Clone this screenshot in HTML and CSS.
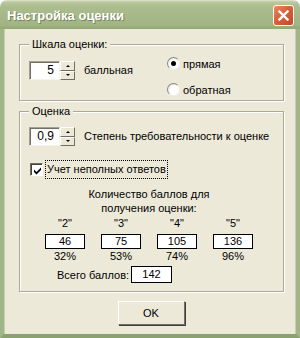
FILE: index.html
```html
<!DOCTYPE html>
<html lang="ru">
<head>
  <meta charset="UTF-8">
  <title>Настройка оценки</title>
  <link rel="stylesheet" href="styles.css">
</head>
<body>
  <div class="window">
    <div class="titlebar">
      <span class="title">Настройка оценки</span>
      <button class="close-btn" title="Закрыть">
        <svg width="11" height="11" viewBox="0 0 11 11">
          <path d="M1.5 1.5 L9.5 9.5 M9.5 1.5 L1.5 9.5" stroke="#fff" stroke-width="2.4" stroke-linecap="square"/>
        </svg>
      </button>
    </div>

    <div class="client">
      <fieldset class="group scale">
        <legend>Шкала оценки:</legend>
        <div class="scale-row">
          <div class="scale-left">
            <div class="spinner">
              <div class="edit">5</div>
              <div class="spin">
                <span class="spin-btn"><i class="arrow up"></i></span>
                <span class="spin-btn"><i class="arrow down"></i></span>
              </div>
            </div>
            <span class="caption">балльная</span>
          </div>
          <div class="radios">
            <label class="radio checked"><span class="dot"></span>прямая</label>
            <label class="radio"><span class="dot"></span>обратная</label>
          </div>
        </div>
      </fieldset>

      <fieldset class="group grade">
        <legend>Оценка</legend>
        <div class="spinner-row">
          <div class="spinner">
            <div class="edit">0,9</div>
            <div class="spin">
              <span class="spin-btn"><i class="arrow up"></i></span>
              <span class="spin-btn"><i class="arrow down"></i></span>
            </div>
          </div>
          <span class="caption">Степень требовательности к оценке</span>
        </div>

        <div class="check-row">
          <span class="checkbox">
            <svg width="9" height="9" viewBox="0 0 9 9">
              <path d="M1 3.5 L3.5 6 L8 1.5 L8 4 L3.5 8.5 L1 6 Z" fill="#000"/>
            </svg>
          </span>
          <span class="check-label">Учет неполных ответов</span>
        </div>

        <div class="points">
          <div class="points-title">Количество баллов для<br>получения оценки:</div>
          <div class="marks">
            <div class="mark"><span>"2"</span><div class="num">46</div><span>32%</span></div>
            <div class="mark"><span>"3"</span><div class="num">75</div><span>53%</span></div>
            <div class="mark"><span>"4"</span><div class="num">105</div><span>74%</span></div>
            <div class="mark"><span>"5"</span><div class="num">136</div><span>96%</span></div>
          </div>
          <div class="total">
            <span>Всего баллов:</span>
            <div class="num total-num">142</div>
          </div>
        </div>
      </fieldset>

      <div class="actions">
        <button class="ok">OK</button>
      </div>
    </div>
  </div>
</body>
</html>
```

FILE: styles.css
```css
body {
  margin: 0;
  background: #fff;
  font-family: "Liberation Sans", Arial, sans-serif;
  font-size: 11px;
  color: #000;
}

.window {
  width: 300px;
  height: 338px;
  display: flex;
  flex-direction: column;
}

.titlebar {
  height: 29px;
  flex: none;
  display: flex;
  align-items: center;
  justify-content: space-between;
  padding: 0 6px 0 7px;
  box-sizing: border-box;
  border-radius: 7px 7px 0 0;
  background: linear-gradient(#dfe6cc 0, #bcc9a0 2px, #adbd90 6px, #a7b889 50%, #a2b484 85%, #93a875 100%);
}

.title {
  color: #fff;
  font-weight: bold;
  font-size: 13px;
  text-shadow: 1px 1px 0 #75865a;
  margin-top: 1px;
}

.close-btn {
  width: 21px;
  height: 21px;
  padding: 0;
  margin-top: 2px;
  border: 1px solid #fff;
  border-radius: 3px;
  background: linear-gradient(135deg, #e98a64 0, #d9603b 45%, #c24a28 100%);
  display: flex;
  align-items: center;
  justify-content: center;
}

.client {
  flex: 1;
  min-height: 0;
  background: #ece9d8;
  border: 4px solid #a2b586;
  border-top: none;
  border-bottom-color: #8ca170;
  box-shadow: inset 1px 0 0 #c3cfae, inset -1px 0 0 #c3cfae;
  padding: 9px 12px 0 15px;
}

/* etched group box */
.group {
  margin: 0;
  width: 265px;
  box-sizing: border-box;
  border: 1px solid #aca899;
  box-shadow: 1px 1px 0 #fff, inset 1px 1px 0 #fff;
  padding: 6px 9px 4px 9px;
}

.group legend {
  padding: 0 3px;
  line-height: 13px;
  background: #ece9d8;
}

.grade {
  margin-top: 4px;
  padding: 9px 9px 8px 9px;
}

.scale-row {
  display: flex;
  align-items: flex-start;
}

.scale-left {
  width: 137px;
  display: flex;
  align-items: flex-start;
  margin-top: 4px;
}

.spinner-row {
  display: flex;
  align-items: flex-start;
}

.spinner {
  display: flex;
  height: 19px;
  flex: none;
}

.edit {
  width: 31px;
  height: 19px;
  box-sizing: border-box;
  background: #fff;
  border: 1px solid;
  border-color: #a5a292 #f4f3ee #f4f3ee #a5a292;
  box-shadow: inset 1px 1px 0 #716f64;
  text-align: right;
  padding-right: 5px;
  line-height: 17px;
  font-size: 12px;
}

.spin {
  width: 15px;
  display: flex;
  flex-direction: column;
}

.spin-btn {
  flex: 1;
  box-sizing: border-box;
  background: #ece9d8;
  border: 1px solid;
  border-color: #fff #716f64 #716f64 #fff;
  display: flex;
  align-items: center;
  justify-content: center;
}

.arrow {
  width: 0;
  height: 0;
  border-left: 2px solid transparent;
  border-right: 2px solid transparent;
}

.arrow.up {
  border-bottom: 2px solid #000;
}

.arrow.down {
  border-top: 2px solid #000;
}

.caption {
  margin-left: 9px;
  line-height: 19px;
  white-space: nowrap;
}

.radios {
  display: flex;
  flex-direction: column;
  gap: 13px;
  margin-left: 1px;
}

.radio {
  display: flex;
  align-items: center;
  height: 13px;
}

.dot {
  width: 13px;
  height: 13px;
  box-sizing: border-box;
  border-radius: 50%;
  background: radial-gradient(circle at 60% 60%, #fff 0, #fff 45%, #e8e6dc 80%);
  border: 1px solid;
  border-color: #8c8a80 #f2f1ea #f2f1ea #8c8a80;
  margin-right: 3px;
  position: relative;
}

.radio.checked .dot::after {
  content: "";
  position: absolute;
  left: 3px;
  top: 3px;
  width: 5px;
  height: 5px;
  border-radius: 50%;
  background: #000;
}

.check-row {
  display: flex;
  align-items: center;
  margin-top: 14px;
  height: 19px;
  margin-left: 1px;
}

.checkbox {
  width: 13px;
  height: 13px;
  box-sizing: border-box;
  background: #fff;
  border: 1px solid;
  border-color: #716f64 #fff #fff #716f64;
  box-shadow: inset 1px 1px 0 #404040;
  display: flex;
  align-items: center;
  justify-content: center;
  padding: 1px 0 0 1px;
}

.check-label {
  margin-left: 2px;
  border: 1px dotted #000;
  padding: 0 1px 0 1px;
  line-height: 17px;
}

.points {
  width: 240px;
  text-align: center;
  margin-top: 8px;
}

.points-title {
  line-height: 14px;
}

.marks {
  display: flex;
  justify-content: center;
  gap: 16px;
  margin-top: 1px;
}

.mark {
  width: 40px;
  display: flex;
  flex-direction: column;
  align-items: center;
  line-height: 14px;
}

.mark span:first-child {
  margin-bottom: 4px;
}

.num {
  width: 40px;
  height: 15px;
  box-sizing: border-box;
  border: 1px solid #000;
  background: #fff;
  line-height: 13px;
  text-align: center;
}

.total {
  display: flex;
  align-items: center;
  margin: 3px 0 0 28px;
  gap: 2px;
}

.total-num {
  width: 41px;
  height: 17px;
  line-height: 15px;
}

.actions {
  display: flex;
  justify-content: center;
  margin-top: 9px;
  padding-right: 1px;
}

.ok {
  width: 67px;
  height: 24px;
  font-family: "Liberation Sans", Arial, sans-serif;
  font-size: 11px;
  background: #ece9d8;
  border: 1px solid;
  border-color: #fff #716f64 #716f64 #fff;
  box-shadow: 1px 1px 0 #404040;
  padding: 0;
}
```
